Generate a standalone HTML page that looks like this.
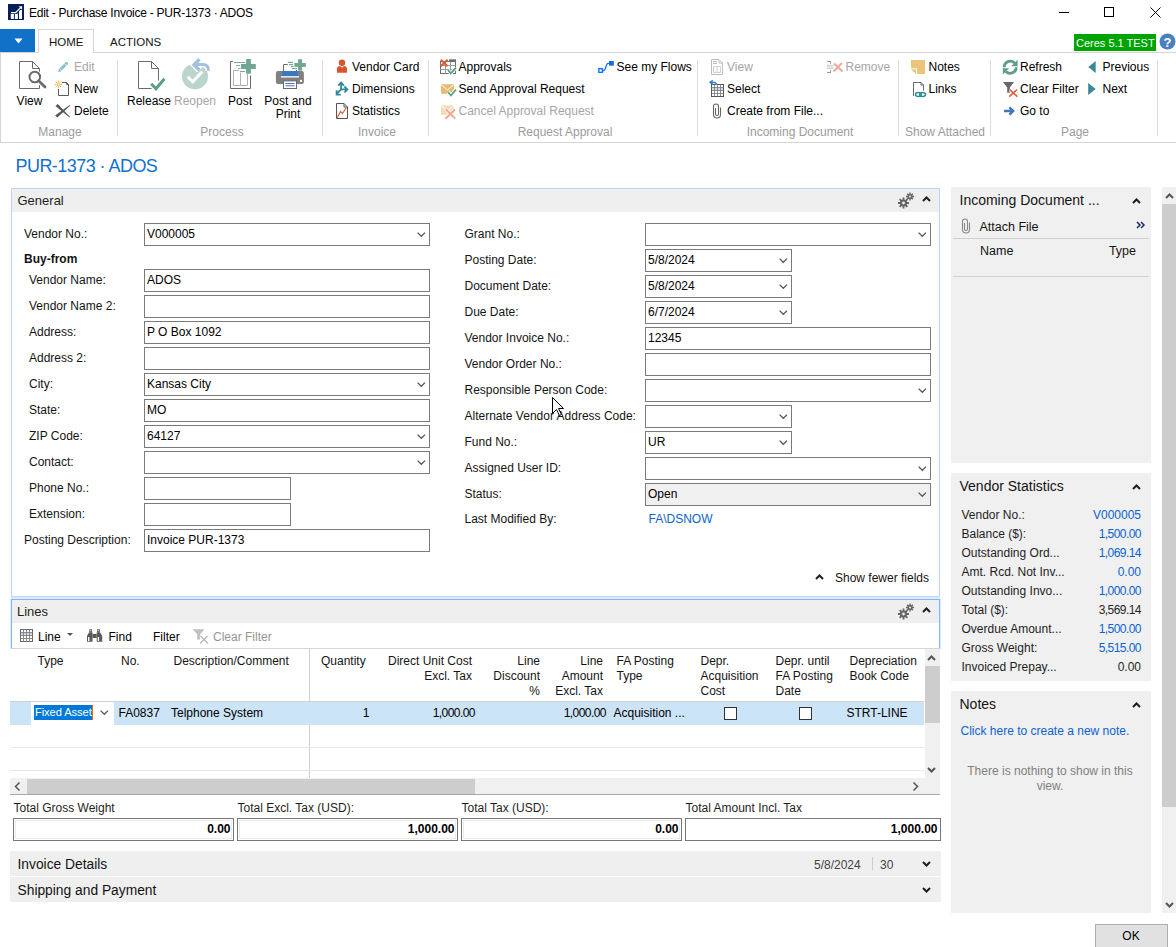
<!DOCTYPE html>
<html><head><meta charset="utf-8"><title>Edit - Purchase Invoice</title>
<style>
html,body{margin:0;padding:0;}
body{width:1176px;height:947px;position:relative;overflow:hidden;background:#fff;font-family:"Liberation Sans", sans-serif;}
.t{position:absolute;white-space:nowrap;font-family:"Liberation Sans", sans-serif;}
svg{overflow:visible}
</style></head><body>
<svg style="position:absolute;left:8px;top:4px" width="16" height="16" viewBox="0 0 16 16"><rect width="16" height="16" fill="#03205a"/><path d="M2.8 9.5V15H5.9V9.5zM6.9 9.5V15H9.9V9.5zM11 6V15H14V6z" fill="#fff"/><path d="M3 8.6H7.6L13 3.2" fill="none" stroke="#03205a" stroke-width="2.8"/><path d="M3 8.6H7.6L12.6 3.6" fill="none" stroke="#fff" stroke-width="1.3"/><path d="M10.6 2.3H14.1V5.8Z" fill="#fff"/></svg>
<div class="t" style="left:29px;top:7px;font-size:12px;line-height:12px;color:#000;letter-spacing:-0.25px;">Edit - Purchase Invoice - PUR-1373 · ADOS</div>
<div style="position:absolute;left:1059px;top:12px;width:10px;height:1px;background:#000"></div>
<div style="position:absolute;left:1104px;top:7px;width:8px;height:8px;border:1px solid #000"></div>
<svg style="position:absolute;left:1150px;top:7px" width="11" height="11" viewBox="0 0 11 11"><path d="M0.5 0.5L10.5 10.5M10.5 0.5L0.5 10.5" stroke="#000" stroke-width="1"/></svg>
<div style="position:absolute;left:0px;top:29px;width:35px;height:23px;background:#1170c8"></div>
<svg style="position:absolute;left:14px;top:38px" width="9" height="6" viewBox="0 0 9 6"><path d="M0.5 0.5H8.5L4.5 5.5z" fill="#fff"/></svg>
<div style="position:absolute;left:0px;top:52px;width:1176px;height:1px;background:#d5d5d5"></div>
<div style="position:absolute;left:38px;top:29px;width:54px;height:23px;background:#fff;border:1px solid #d5d5d5;border-bottom:none"></div>
<div class="t" style="left:49px;top:36.5px;font-size:11.5px;line-height:11.5px;color:#141414;">HOME</div>
<div class="t" style="left:110px;top:36.5px;font-size:11.5px;line-height:11.5px;color:#141414;">ACTIONS</div>
<div style="position:absolute;left:1074px;top:34px;width:82px;height:17px;background:#00a400"></div>
<div class="t" style="left:1076px;top:38px;font-size:11px;line-height:11px;color:#fff;">Ceres 5.1 TEST</div>
<svg style="position:absolute;left:1159px;top:33px" width="17" height="17" viewBox="0 0 17 17"><circle cx="8.5" cy="8.5" r="8" fill="#4a7fc1"/><text x="8.5" y="13.5" font-family="Liberation Sans" font-weight="bold" font-size="13" fill="#fff" text-anchor="middle">?</text></svg>
<div style="position:absolute;left:0px;top:53px;width:1px;height:90px;background:#d5d5d5"></div>
<div style="position:absolute;left:0px;top:142px;width:1176px;height:1px;background:#d5d5d5"></div>
<div style="position:absolute;left:117px;top:60px;width:1px;height:76px;background:#dcdcdc"></div>
<div style="position:absolute;left:322px;top:60px;width:1px;height:76px;background:#dcdcdc"></div>
<div style="position:absolute;left:428px;top:60px;width:1px;height:76px;background:#dcdcdc"></div>
<div style="position:absolute;left:697px;top:60px;width:1px;height:76px;background:#dcdcdc"></div>
<div style="position:absolute;left:898px;top:60px;width:1px;height:76px;background:#dcdcdc"></div>
<div style="position:absolute;left:990px;top:60px;width:1px;height:76px;background:#dcdcdc"></div>
<div style="position:absolute;left:1157px;top:60px;width:1px;height:76px;background:#dcdcdc"></div>
<div class="t" style="left:-270.5px;width:600px;text-align:center;top:94.5px;font-size:12px;line-height:12px;color:#000;">View</div>
<div class="t" style="left:74px;top:61px;font-size:12px;line-height:12px;color:#a6a6a6;">Edit</div>
<div class="t" style="left:74px;top:83px;font-size:12px;line-height:12px;color:#000;">New</div>
<div class="t" style="left:74px;top:105px;font-size:12px;line-height:12px;color:#000;">Delete</div>
<div class="t" style="left:-240px;width:600px;text-align:center;top:126px;font-size:12px;line-height:12px;color:#9b9b9b;">Manage</div>
<div class="t" style="left:-151px;width:600px;text-align:center;top:94.5px;font-size:12px;line-height:12px;color:#000;">Release</div>
<div class="t" style="left:-105px;width:600px;text-align:center;top:94.5px;font-size:12px;line-height:12px;color:#a6a6a6;">Reopen</div>
<div class="t" style="left:-60px;width:600px;text-align:center;top:94.5px;font-size:12px;line-height:12px;color:#000;">Post</div>
<div class="t" style="left:-12px;width:600px;text-align:center;top:94.5px;font-size:12px;line-height:12px;color:#000;">Post and</div>
<div class="t" style="left:-12px;width:600px;text-align:center;top:107.5px;font-size:12px;line-height:12px;color:#000;">Print</div>
<div class="t" style="left:-78px;width:600px;text-align:center;top:126px;font-size:12px;line-height:12px;color:#9b9b9b;">Process</div>
<div class="t" style="left:352px;top:61px;font-size:12px;line-height:12px;color:#000;">Vendor Card</div>
<div class="t" style="left:352px;top:83px;font-size:12px;line-height:12px;color:#000;">Dimensions</div>
<div class="t" style="left:352px;top:105px;font-size:12px;line-height:12px;color:#000;">Statistics</div>
<div class="t" style="left:77px;width:600px;text-align:center;top:126px;font-size:12px;line-height:12px;color:#9b9b9b;">Invoice</div>
<div class="t" style="left:458.5px;top:61px;font-size:12px;line-height:12px;color:#000;">Approvals</div>
<div class="t" style="left:458.5px;top:83px;font-size:12px;line-height:12px;color:#000;">Send Approval Request</div>
<div class="t" style="left:458.5px;top:105px;font-size:12px;line-height:12px;color:#a6a6a6;">Cancel Approval Request</div>
<div class="t" style="left:616.5px;top:61px;font-size:12px;line-height:12px;color:#000;">See my Flows</div>
<div class="t" style="left:265px;width:600px;text-align:center;top:126px;font-size:12px;line-height:12px;color:#9b9b9b;">Request Approval</div>
<div class="t" style="left:727px;top:61px;font-size:12px;line-height:12px;color:#a6a6a6;">View</div>
<div class="t" style="left:845.5px;top:61px;font-size:12px;line-height:12px;color:#a6a6a6;">Remove</div>
<div class="t" style="left:727px;top:83px;font-size:12px;line-height:12px;color:#000;">Select</div>
<svg style="position:absolute;left:712.5px;top:102.5px" width="9" height="16" viewBox="0 0 9 16"><path d="M7.5 4.5V11.5A3.5 3.5 0 0 1 0.5 11.5V3.5A2.5 2.5 0 0 1 5.5 3.5V11A1.5 1.5 0 0 1 2.5 11V5" fill="none" stroke="#666" stroke-width="1.1"/></svg>
<div class="t" style="left:727px;top:105px;font-size:12px;line-height:12px;color:#000;">Create from File...</div>
<div class="t" style="left:500px;width:600px;text-align:center;top:126px;font-size:12px;line-height:12px;color:#9b9b9b;">Incoming Document</div>
<div class="t" style="left:928.5px;top:61px;font-size:12px;line-height:12px;color:#000;">Notes</div>
<div class="t" style="left:928.5px;top:83px;font-size:12px;line-height:12px;color:#000;">Links</div>
<div class="t" style="left:645px;width:600px;text-align:center;top:126px;font-size:12px;line-height:12px;color:#9b9b9b;">Show Attached</div>
<div class="t" style="left:1020px;top:61px;font-size:12px;line-height:12px;color:#000;">Refresh</div>
<div class="t" style="left:1020px;top:83px;font-size:12px;line-height:12px;color:#000;">Clear Filter</div>
<div class="t" style="left:1020px;top:105px;font-size:12px;line-height:12px;color:#000;">Go to</div>
<div class="t" style="left:1102.5px;top:61px;font-size:12px;line-height:12px;color:#000;">Previous</div>
<div class="t" style="left:1102.5px;top:83px;font-size:12px;line-height:12px;color:#000;">Next</div>
<div class="t" style="left:775px;width:600px;text-align:center;top:126px;font-size:12px;line-height:12px;color:#9b9b9b;">Page</div>
<svg style="position:absolute;left:0;top:0" width="1176" height="150" viewBox="0 0 1176 150"><path d="M19.5 61.5H32.5L39.5 68.5V88.5H19.5Z" fill="#fff" stroke="#6b6b6b"/><path d="M32.5 61.5V68.5H39.5" fill="none" stroke="#6b6b6b"/><circle cx="34.8" cy="77" r="7.2" fill="#fff"/><path d="M38.5 80.7L45.3 87.3" stroke="#fff" stroke-width="5"/><circle cx="34.8" cy="77" r="5.3" fill="none" stroke="#6b6b6b" stroke-width="2"/><path d="M38.6 80.8L45 87" stroke="#6b6b6b" stroke-width="2.8" stroke-linecap="round"/><path d="M60.3 69.7L66.6 63.4" stroke="#8ec0cc" stroke-width="3" stroke-linecap="round"/><path d="M58 72.2L58.9 68.9L61.3 71.3Z" fill="#8ec0cc"/><path d="M64.6 63.6L66.4 65.4M59.5 68.7L61.3 70.5" stroke="#fff" stroke-width="0.8"/><path d="M62 82.5H66.5L68.5 84.5V95.5H58.5V89" fill="none" stroke="#5a5a5a"/><path d="M66.5 82.5V84.5H68.5" fill="none" stroke="#5a5a5a"/><path d="M58.4 80.6V82.4M58.4 86.4V88.2M54.6 84.4H56.4M60.4 84.4H62.2M55.7 81.7L57 83M59.8 85.8L61.1 87.1M61.1 81.7L59.8 83M57 85.8L55.7 87.1" stroke="#f0a838" stroke-width="0.9"/><circle cx="58.4" cy="84.4" r="1.3" fill="#fff" stroke="#f0a838" stroke-width="0.9"/><path d="M57.7 103.9L70.1 117L69.5 117.6L55.5 106.1Z" fill="#555"/><path d="M55.1 115.4L69.7 105L70.3 105.6L57.3 117.6Z" fill="#555"/><path d="M138.5 61.5H151.5L158.5 68.5V88.5H138.5Z" fill="#fff"/><path d="M158.5 80.5V68.5L151.5 61.5H138.5V88.5H151.5" fill="none" stroke="#6b6b6b"/><path d="M151.5 61.5V68.5H158.5" fill="none" stroke="#6b6b6b"/><path d="M151.2 83.8L156 88.8L164.4 78.8" fill="none" stroke="#5a9e88" stroke-width="3"/><circle cx="195" cy="76.4" r="13" fill="#bad5cb"/><path d="M187.7 76.8L192.7 81.8L202.3 71.4" fill="none" stroke="#fff" stroke-width="3"/><g fill="none" stroke="#fff" stroke-width="6"><path d="M199.5 59.3L194 64.7L199.5 70.3"/><path d="M196 64.6H203C206.5 64.6 208.5 67 208.5 70.8"/></g><g fill="none" stroke="#a3c0e0"><path d="M199.5 59.3L194 64.7L199.5 70.3" stroke-width="3.4"/><path d="M196 64.6H203C206.5 64.6 208.5 67 208.5 70.8" stroke-width="3"/></g><path d="M233 61.5H230.5V88.5H250.5V75.5" fill="none" stroke="#6b6b6b"/><path d="M239 70.5H233.5V85.5H247.5V74M240.5 72.5V85.5" fill="none" stroke="#b0b0b0"/><path d="M234 62.5H245M236 65.5H240M238 68.5H240.5M240 71.5H245" stroke="#7aab98" stroke-width="1.2"/><rect x="246.1" y="59" width="4.8" height="14.7" fill="#6fa792"/><rect x="241" y="64" width="14.8" height="5" fill="#6fa792"/><rect x="298.1" y="59.2" width="3.9" height="11.5" fill="#6fa792"/><rect x="294.3" y="63" width="11.5" height="3.9" fill="#6fa792"/><path d="M287.8 62.4H293M289 64.6H293M291 66.6H293.5M292 68.5H297" stroke="#7aab98" stroke-width="1.1"/><path d="M287.8 64.5H283.5V72M296.5 70V72" fill="none" stroke="#6b6b6b"/><rect x="275.9" y="71.1" width="28" height="12.8" rx="2" fill="#808080"/><rect x="282" y="71" width="16.1" height="5" fill="#3c78c0"/><rect x="281" y="76.2" width="18" height="1.3" fill="#fff"/><rect x="283.5" y="80.9" width="13" height="7.6" fill="#fff" stroke="#6b6b6b"/><path d="M285.5 83.5H294.5M285.5 85.7H294.5" stroke="#3c78c0" stroke-width="1.1"/><rect x="300" y="79.9" width="2" height="2" fill="#fff"/><circle cx="342" cy="62.8" r="3.2" fill="#d9562c"/><path d="M337 72.8V69C337 67 338.5 66.1 340 66.1L342 67.8L344 66.1C345.5 66.1 347 67 347 69V72.8Z" fill="#d9562c"/><path d="M341.1 89.4V83.5M338.2 85.6L341.1 82.6L344 85.6M341.1 89.4H346.5M344.4 86.5L347.4 89.4L344.4 92.3M341.1 89.4L337 93.5M336.6 90.3V94.6H340.8" fill="none" stroke="#2e8a96" stroke-width="1.8"/><path d="M336.5 103.5H344L347.5 107V118.5H336.5Z" fill="#fff" stroke="#555"/><path d="M344 103.5V107H347.5" fill="none" stroke="#555"/><path d="M337.3 117.8L340.5 111.5L342.5 113.5L346.5 107.2" fill="none" stroke="#e06040" stroke-width="1.2"/><rect x="440.5" y="61.5" width="15" height="12" fill="#fff" stroke="#6f6f6f"/><path d="M440.5 65.5H455.5M440.5 69.5H455.5M445.5 61.5V73.5M450.5 61.5V73.5" stroke="#9a9a9a"/><rect x="449" y="59.3" width="7" height="2.5" fill="#6f6f6f"/><path d="M440.8 59.6L447.6 66.2M447.6 59.6L440.8 66.2" stroke="#dc5a35" stroke-width="2"/><path d="M448 70L450.8 73.4L456 67.6" fill="none" stroke="#fff" stroke-width="3.5"/><path d="M448 70L450.8 73.4L456 67.6" fill="none" stroke="#5a9e88" stroke-width="1.8"/><rect x="441" y="84.2" width="13" height="9.6" fill="#e8bb70"/><path d="M441 84.5L447.5 90L454 84.5" fill="none" stroke="#fff" stroke-width="1"/><path d="M447.8 92L451 95.5L456 89.5" fill="none" stroke="#fff" stroke-width="3.5"/><path d="M447.8 92L451 95.5L456 89.5" fill="none" stroke="#5a9e88" stroke-width="1.8"/><rect x="441" y="105.3" width="13" height="9.6" fill="#f5dcb8"/><path d="M441 105.6L447.5 111L454 105.6" fill="none" stroke="#fff" stroke-width="1"/><path d="M445.8 109.2L455.3 118.6M455 109.5L445.5 118.8" stroke="#fff" stroke-width="3.5"/><path d="M445.8 109.2L455.3 118.6M455 109.5L445.5 118.8" stroke="#eaa898" stroke-width="2"/><rect x="598.8" y="68.7" width="3.6" height="3.6" fill="none" stroke="#0a6cff" stroke-width="1.3"/><path d="M602.4 70.5H603.8C606 70.5 605.8 63.3 608 63.3H609.5" fill="none" stroke="#0a6cff" stroke-width="1.3"/><rect x="609" y="61" width="4.8" height="4.7" fill="#0a6cff"/><path d="M711.5 59.5H719L722.5 63V74.5H711.5Z" fill="#fff" stroke="#bdbdbd"/><path d="M719 59.5V63H722.5" fill="none" stroke="#bdbdbd"/><path d="M713 61.5H717M713 63.5H717" stroke="#a8c4e0"/><path d="M713.5 66.5H720.5V72.5H713.5ZM717 66.5V72.5" fill="none" stroke="#d0d0d0"/><path d="M830.5 63.8V61.5H827M830.5 70.2V72.5H827" fill="none" stroke="#999" stroke-width="1.1"/><rect x="827" y="65.2" width="7" height="3.3" fill="#dde8f3"/><path d="M827 65.3H833M827 68.4H833" stroke="#c8c8c8" stroke-width="0.8"/><path d="M834 63.5L842.5 71.5M842 63L833.5 71.5" stroke="#eeaa98" stroke-width="2"/><rect x="711.5" y="84.5" width="12" height="12" fill="#fff" stroke="#555"/><rect x="712" y="87.6" width="11" height="3" fill="#c8ddf0"/><path d="M711.5 87.5H723.5M711.5 90.5H723.5M711.5 93.5H723.5M714.5 84.5V96.5M717.5 84.5V96.5M720.5 84.5V96.5" stroke="#777" stroke-width="0.8"/><path d="M716.5 85C716.5 83 715 82.3 713 82.3H711" fill="none" stroke="#3e7cc0" stroke-width="1.4"/><path d="M712.8 80.2L710 82.3L712.8 84.4" fill="none" stroke="#3e7cc0" stroke-width="1.4"/><path d="M911 60H925V74H917V68.2H911Z" fill="#ecc47a"/><path d="M911 69.2H916V74Z" fill="#ecc47a"/><path d="M913.5 95.9V82.5H921L923.5 85V90.6" fill="none" stroke="#6b6b6b"/><path d="M921 82.5V85H923.5" fill="none" stroke="#6b6b6b"/><ellipse cx="918.4" cy="94.5" rx="2.9" ry="2" fill="none" stroke="#fff" stroke-width="3"/><ellipse cx="918.4" cy="94.5" rx="2.9" ry="2" fill="none" stroke="#2e8a96" stroke-width="1.5"/><ellipse cx="922.6" cy="94.5" rx="2.9" ry="2" fill="none" stroke="#2e8a96" stroke-width="1.5"/><g fill="none" stroke="#5a9e86" stroke-width="2.8"><path d="M1004.2 67.2A6 6 0 0 1 1014.5 63"/><path d="M1016.2 67.2A6 6 0 0 1 1005.9 71.4"/></g><path d="M1017.6 59.8V66.2H1011.2Z" fill="#5a9e86"/><path d="M1002.8 74.6V68.2H1009.2Z" fill="#5a9e86"/><path d="M1003 82H1014L1009.8 87.6V92.7H1007.2V87.6Z" fill="#666"/><path d="M1009.6 89.6L1017.4 96.6M1017 89.6L1009.2 96.6" stroke="#fff" stroke-width="3"/><path d="M1009.6 89.6L1017.4 96.6M1017 89.6L1009.2 96.6" stroke="#e05a3a" stroke-width="1.5"/><path d="M1004 111H1013.2M1009.4 107.3L1013.3 111L1009.4 114.7" fill="none" stroke="#3e78b8" stroke-width="2.3"/><path d="M1095.7 61V72.9L1088.3 66.9Z" fill="#3b8898"/><path d="M1088.2 83.1V95L1095.7 89Z" fill="#3b8898"/></svg>
<div class="t" style="left:15.5px;top:156.5px;font-size:18px;line-height:18px;color:#1170cf;letter-spacing:-0.55px">PUR-1373 · ADOS</div>
<div style="position:absolute;left:11px;top:188px;width:927px;height:407px;border:1px solid #bcd5f8"></div>
<div style="position:absolute;left:12px;top:189px;width:927px;height:23px;background:#efefef"></div>
<div class="t" style="left:17.5px;top:194px;font-size:13px;line-height:13px;color:#1e1e1e;">General</div>
<svg style="position:absolute;left:896px;top:192px" width="22" height="18" viewBox="0 0 22 18"><g fill="#666"><circle cx="7.5" cy="11" r="3.6"/><g stroke="#666" stroke-width="1.8"><path d="M7.5 5.5V16.5M2 11H13M3.6 7.1L11.4 14.9M11.4 7.1L3.6 14.9"/></g><circle cx="7.5" cy="11" r="1.4" fill="#efefef"/><circle cx="14" cy="4.5" r="2.6"/><g stroke="#666" stroke-width="1.4"><path d="M14 0.5V8.5M10 4.5H18M11.2 1.7L16.8 7.3M16.8 1.7L11.2 7.3"/></g><circle cx="14" cy="4.5" r="1" fill="#efefef"/></g></svg>
<svg style="position:absolute;left:922px;top:196px" width="9" height="6" viewBox="0 0 9 6"><path d="M1 5L4.5 1.5L8 5" fill="none" stroke="#1e1e1e" stroke-width="2"/></svg>
<div class="t" style="left:24px;top:227.5px;font-size:12px;line-height:12px;color:#141414;">Vendor No.:</div>
<div style="position:absolute;left:144px;top:223px;width:284px;height:21px;border:1px solid #7a7a7a;background:#fff"></div>
<div class="t" style="left:147px;top:227.5px;font-size:12px;line-height:12px;color:#000;">V000005</div>
<svg style="position:absolute;left:417px;top:232px" width="10" height="6" viewBox="0 0 10 6"><path d="M0.6 0.6L4.3 4.3L8 0.6" fill="none" stroke="#555" stroke-width="1.3"/></svg>
<div class="t" style="left:29px;top:273.5px;font-size:12px;line-height:12px;color:#141414;">Vendor Name:</div>
<div style="position:absolute;left:144px;top:269px;width:284px;height:21px;border:1px solid #7a7a7a;background:#fff"></div>
<div class="t" style="left:147px;top:273.5px;font-size:12px;line-height:12px;color:#000;">ADOS</div>
<div class="t" style="left:29px;top:299.5px;font-size:12px;line-height:12px;color:#141414;">Vendor Name 2:</div>
<div style="position:absolute;left:144px;top:295px;width:284px;height:21px;border:1px solid #7a7a7a;background:#fff"></div>
<div class="t" style="left:29px;top:325.5px;font-size:12px;line-height:12px;color:#141414;">Address:</div>
<div style="position:absolute;left:144px;top:321px;width:284px;height:21px;border:1px solid #7a7a7a;background:#fff"></div>
<div class="t" style="left:147px;top:325.5px;font-size:12px;line-height:12px;color:#000;">P O Box 1092</div>
<div class="t" style="left:29px;top:351.5px;font-size:12px;line-height:12px;color:#141414;">Address 2:</div>
<div style="position:absolute;left:144px;top:347px;width:284px;height:21px;border:1px solid #7a7a7a;background:#fff"></div>
<div class="t" style="left:29px;top:377.5px;font-size:12px;line-height:12px;color:#141414;">City:</div>
<div style="position:absolute;left:144px;top:373px;width:284px;height:21px;border:1px solid #7a7a7a;background:#fff"></div>
<div class="t" style="left:147px;top:377.5px;font-size:12px;line-height:12px;color:#000;">Kansas City</div>
<svg style="position:absolute;left:417px;top:382px" width="10" height="6" viewBox="0 0 10 6"><path d="M0.6 0.6L4.3 4.3L8 0.6" fill="none" stroke="#555" stroke-width="1.3"/></svg>
<div class="t" style="left:29px;top:403.5px;font-size:12px;line-height:12px;color:#141414;">State:</div>
<div style="position:absolute;left:144px;top:399px;width:284px;height:21px;border:1px solid #7a7a7a;background:#fff"></div>
<div class="t" style="left:147px;top:403.5px;font-size:12px;line-height:12px;color:#000;">MO</div>
<div class="t" style="left:29px;top:429.5px;font-size:12px;line-height:12px;color:#141414;">ZIP Code:</div>
<div style="position:absolute;left:144px;top:425px;width:284px;height:21px;border:1px solid #7a7a7a;background:#fff"></div>
<div class="t" style="left:147px;top:429.5px;font-size:12px;line-height:12px;color:#000;">64127</div>
<svg style="position:absolute;left:417px;top:434px" width="10" height="6" viewBox="0 0 10 6"><path d="M0.6 0.6L4.3 4.3L8 0.6" fill="none" stroke="#555" stroke-width="1.3"/></svg>
<div class="t" style="left:29px;top:455.5px;font-size:12px;line-height:12px;color:#141414;">Contact:</div>
<div style="position:absolute;left:144px;top:451px;width:284px;height:21px;border:1px solid #7a7a7a;background:#fff"></div>
<svg style="position:absolute;left:417px;top:460px" width="10" height="6" viewBox="0 0 10 6"><path d="M0.6 0.6L4.3 4.3L8 0.6" fill="none" stroke="#555" stroke-width="1.3"/></svg>
<div class="t" style="left:29px;top:481.5px;font-size:12px;line-height:12px;color:#141414;">Phone No.:</div>
<div style="position:absolute;left:144px;top:477px;width:145px;height:21px;border:1px solid #7a7a7a;background:#fff"></div>
<div class="t" style="left:29px;top:507.5px;font-size:12px;line-height:12px;color:#141414;">Extension:</div>
<div style="position:absolute;left:144px;top:503px;width:145px;height:21px;border:1px solid #7a7a7a;background:#fff"></div>
<div class="t" style="left:24px;top:533.5px;font-size:12px;line-height:12px;color:#141414;">Posting Description:</div>
<div style="position:absolute;left:144px;top:529px;width:284px;height:21px;border:1px solid #7a7a7a;background:#fff"></div>
<div class="t" style="left:147px;top:533.5px;font-size:12px;line-height:12px;color:#000;">Invoice PUR-1373</div>
<div class="t" style="left:24px;top:253px;font-size:12px;line-height:12px;color:#141414;font-weight:bold;">Buy-from</div>
<div class="t" style="left:464.5px;top:227.5px;font-size:12px;line-height:12px;color:#141414;">Grant No.:</div>
<div style="position:absolute;left:645px;top:223px;width:284px;height:21px;border:1px solid #7a7a7a;background:#fff"></div>
<svg style="position:absolute;left:918px;top:232px" width="10" height="6" viewBox="0 0 10 6"><path d="M0.6 0.6L4.3 4.3L8 0.6" fill="none" stroke="#555" stroke-width="1.3"/></svg>
<div class="t" style="left:464.5px;top:253.5px;font-size:12px;line-height:12px;color:#141414;">Posting Date:</div>
<div style="position:absolute;left:645px;top:249px;width:145px;height:21px;border:1px solid #7a7a7a;background:#fff"></div>
<div class="t" style="left:648px;top:253.5px;font-size:12px;line-height:12px;color:#000;">5/8/2024</div>
<svg style="position:absolute;left:779px;top:258px" width="10" height="6" viewBox="0 0 10 6"><path d="M0.6 0.6L4.3 4.3L8 0.6" fill="none" stroke="#555" stroke-width="1.3"/></svg>
<div class="t" style="left:464.5px;top:279.5px;font-size:12px;line-height:12px;color:#141414;">Document Date:</div>
<div style="position:absolute;left:645px;top:275px;width:145px;height:21px;border:1px solid #7a7a7a;background:#fff"></div>
<div class="t" style="left:648px;top:279.5px;font-size:12px;line-height:12px;color:#000;">5/8/2024</div>
<svg style="position:absolute;left:779px;top:284px" width="10" height="6" viewBox="0 0 10 6"><path d="M0.6 0.6L4.3 4.3L8 0.6" fill="none" stroke="#555" stroke-width="1.3"/></svg>
<div class="t" style="left:464.5px;top:305.5px;font-size:12px;line-height:12px;color:#141414;">Due Date:</div>
<div style="position:absolute;left:645px;top:301px;width:145px;height:21px;border:1px solid #7a7a7a;background:#fff"></div>
<div class="t" style="left:648px;top:305.5px;font-size:12px;line-height:12px;color:#000;">6/7/2024</div>
<svg style="position:absolute;left:779px;top:310px" width="10" height="6" viewBox="0 0 10 6"><path d="M0.6 0.6L4.3 4.3L8 0.6" fill="none" stroke="#555" stroke-width="1.3"/></svg>
<div class="t" style="left:464.5px;top:331.5px;font-size:12px;line-height:12px;color:#141414;">Vendor Invoice No.:</div>
<div style="position:absolute;left:645px;top:327px;width:284px;height:21px;border:1px solid #7a7a7a;background:#fff"></div>
<div class="t" style="left:648px;top:331.5px;font-size:12px;line-height:12px;color:#000;">12345</div>
<div class="t" style="left:464.5px;top:357.5px;font-size:12px;line-height:12px;color:#141414;">Vendor Order No.:</div>
<div style="position:absolute;left:645px;top:353px;width:284px;height:21px;border:1px solid #7a7a7a;background:#fff"></div>
<div class="t" style="left:464.5px;top:383.5px;font-size:12px;line-height:12px;color:#141414;">Responsible Person Code:</div>
<div style="position:absolute;left:645px;top:379px;width:284px;height:21px;border:1px solid #7a7a7a;background:#fff"></div>
<svg style="position:absolute;left:918px;top:388px" width="10" height="6" viewBox="0 0 10 6"><path d="M0.6 0.6L4.3 4.3L8 0.6" fill="none" stroke="#555" stroke-width="1.3"/></svg>
<div class="t" style="left:464.5px;top:409.5px;font-size:12px;line-height:12px;color:#141414;">Alternate Vendor Address Code:</div>
<div style="position:absolute;left:645px;top:405px;width:145px;height:21px;border:1px solid #7a7a7a;background:#fff"></div>
<svg style="position:absolute;left:779px;top:414px" width="10" height="6" viewBox="0 0 10 6"><path d="M0.6 0.6L4.3 4.3L8 0.6" fill="none" stroke="#555" stroke-width="1.3"/></svg>
<div class="t" style="left:464.5px;top:435.5px;font-size:12px;line-height:12px;color:#141414;">Fund No.:</div>
<div style="position:absolute;left:645px;top:431px;width:145px;height:21px;border:1px solid #7a7a7a;background:#fff"></div>
<div class="t" style="left:648px;top:435.5px;font-size:12px;line-height:12px;color:#000;">UR</div>
<svg style="position:absolute;left:779px;top:440px" width="10" height="6" viewBox="0 0 10 6"><path d="M0.6 0.6L4.3 4.3L8 0.6" fill="none" stroke="#555" stroke-width="1.3"/></svg>
<div class="t" style="left:464.5px;top:461.5px;font-size:12px;line-height:12px;color:#141414;">Assigned User ID:</div>
<div style="position:absolute;left:645px;top:457px;width:284px;height:21px;border:1px solid #7a7a7a;background:#fff"></div>
<svg style="position:absolute;left:918px;top:466px" width="10" height="6" viewBox="0 0 10 6"><path d="M0.6 0.6L4.3 4.3L8 0.6" fill="none" stroke="#555" stroke-width="1.3"/></svg>
<div class="t" style="left:464.5px;top:487.5px;font-size:12px;line-height:12px;color:#141414;">Status:</div>
<div style="position:absolute;left:645px;top:483px;width:284px;height:21px;border:1px solid #7a7a7a;background:#f0f0f0"></div>
<div class="t" style="left:648px;top:487.5px;font-size:12px;line-height:12px;color:#000;">Open</div>
<svg style="position:absolute;left:918px;top:492px" width="10" height="6" viewBox="0 0 10 6"><path d="M0.6 0.6L4.3 4.3L8 0.6" fill="none" stroke="#555" stroke-width="1.3"/></svg>
<div class="t" style="left:464.5px;top:513px;font-size:12px;line-height:12px;color:#141414;">Last Modified By:</div>
<div class="t" style="left:648.5px;top:513px;font-size:12px;line-height:12px;color:#0b63d0;">FA\DSNOW</div>
<svg style="position:absolute;left:815px;top:574px" width="9" height="6" viewBox="0 0 9 6"><path d="M1 5L4.5 1.5L8 5" fill="none" stroke="#1e1e1e" stroke-width="2"/></svg>
<div class="t" style="left:835px;top:572px;font-size:12px;line-height:12px;color:#141414;">Show fewer fields</div>
<div style="position:absolute;left:11px;top:599px;width:927px;height:49px;border:1px solid #82b5fb;border-bottom:none;box-shadow:0 -2px 0 #dde9fc, 1px 0 0 #dde9fc, -1px 0 0 #dde9fc"></div>
<div style="position:absolute;left:12px;top:600px;width:927px;height:23px;background:#efefef"></div>
<div class="t" style="left:17px;top:605px;font-size:13px;line-height:13px;color:#1e1e1e;">Lines</div>
<svg style="position:absolute;left:896px;top:603px" width="22" height="18" viewBox="0 0 22 18"><g fill="#666"><circle cx="7.5" cy="11" r="3.6"/><g stroke="#666" stroke-width="1.8"><path d="M7.5 5.5V16.5M2 11H13M3.6 7.1L11.4 14.9M11.4 7.1L3.6 14.9"/></g><circle cx="7.5" cy="11" r="1.4" fill="#efefef"/><circle cx="14" cy="4.5" r="2.6"/><g stroke="#666" stroke-width="1.4"><path d="M14 0.5V8.5M10 4.5H18M11.2 1.7L16.8 7.3M16.8 1.7L11.2 7.3"/></g><circle cx="14" cy="4.5" r="1" fill="#efefef"/></g></svg>
<svg style="position:absolute;left:922px;top:607px" width="9" height="6" viewBox="0 0 9 6"><path d="M1 5L4.5 1.5L8 5" fill="none" stroke="#1e1e1e" stroke-width="2"/></svg>
<svg style="position:absolute;left:19px;top:628px" width="15" height="15" viewBox="0 0 15 15"><rect x="1.5" y="1.5" width="12" height="12" fill="#fff" stroke="#666"/><rect x="2" y="4.5" width="11" height="3" fill="#c6dcf2"/><path d="M1.5 4.5H13.5M1.5 7.5H13.5M1.5 10.5H13.5M4.5 1.5V13.5M7.5 1.5V13.5M10.5 1.5V13.5" stroke="#888"/></svg>
<div class="t" style="left:38px;top:631px;font-size:12px;line-height:12px;color:#000;">Line</div>
<svg style="position:absolute;left:67px;top:633px" width="7" height="4" viewBox="0 0 7 4"><path d="M0 0H6L3 3z" fill="#555"/></svg>
<svg style="position:absolute;left:0;top:600px" width="300" height="50" viewBox="0 600 300 50"><g fill="#5a5a5a"><path d="M87 641.8V636L89 632.5H92.5V641.8Z"/><path d="M102.2 641.8V636L100.2 632.5H96.7V641.8Z"/><rect x="92.5" y="634" width="4.2" height="4"/><rect x="89.3" y="629.3" width="2.8" height="3.4"/><rect x="97.1" y="629.3" width="2.8" height="3.4"/></g><g fill="#fff"><rect x="88" y="637" width="1.4" height="4"/><rect x="97.7" y="637" width="1.4" height="4"/><rect x="90.2" y="630.2" width="1" height="1"/><rect x="98" y="630.2" width="1" height="1"/></g><path d="M192.5 629.3H204.5L200.2 634.3V639.5H197.2V634.3Z" fill="#c0c0c0"/><path d="M200.5 636L208 643.5M207.5 636L200 643.5" stroke="#fff" stroke-width="3"/><path d="M200.5 636L208 643.5M207.5 636L200 643.5" stroke="#b8b8b8" stroke-width="1.3"/></svg>
<div class="t" style="left:108.5px;top:631px;font-size:12px;line-height:12px;color:#000;">Find</div>
<div class="t" style="left:153px;top:631px;font-size:12px;line-height:12px;color:#000;">Filter</div>
<div class="t" style="left:213px;top:631px;font-size:12px;line-height:12px;color:#959595;">Clear Filter</div>
<div style="position:absolute;left:11px;top:648px;width:929px;height:1px;background:#d5d5d5"></div>
<div style="position:absolute;left:309px;top:649px;width:1px;height:129px;background:#d0d0d0"></div>
<div class="t" style="left:37.5px;top:655px;font-size:12px;line-height:12px;color:#141414;">Type</div>
<div class="t" style="left:121px;top:655px;font-size:12px;line-height:12px;color:#141414;">No.</div>
<div class="t" style="left:173.5px;top:655px;font-size:12px;line-height:12px;color:#141414;">Description/Comment</div>
<div class="t" style="left:321px;top:655px;font-size:12px;line-height:12px;color:#141414;">Quantity</div>
<div class="t" style="right:704px;top:655px;font-size:12px;line-height:12px;color:#141414;">Direct Unit Cost</div>
<div class="t" style="right:704px;top:670px;font-size:12px;line-height:12px;color:#141414;">Excl. Tax</div>
<div class="t" style="right:636px;top:655px;font-size:12px;line-height:12px;color:#141414;">Line</div>
<div class="t" style="right:636px;top:670px;font-size:12px;line-height:12px;color:#141414;">Discount</div>
<div class="t" style="right:636px;top:685px;font-size:12px;line-height:12px;color:#141414;">%</div>
<div class="t" style="right:573px;top:655px;font-size:12px;line-height:12px;color:#141414;">Line</div>
<div class="t" style="right:573px;top:670px;font-size:12px;line-height:12px;color:#141414;">Amount</div>
<div class="t" style="right:573px;top:685px;font-size:12px;line-height:12px;color:#141414;">Excl. Tax</div>
<div class="t" style="left:616.5px;top:655px;font-size:12px;line-height:12px;color:#141414;">FA Posting</div>
<div class="t" style="left:616.5px;top:670px;font-size:12px;line-height:12px;color:#141414;">Type</div>
<div class="t" style="left:700.5px;top:655px;font-size:12px;line-height:12px;color:#141414;">Depr.</div>
<div class="t" style="left:700.5px;top:670px;font-size:12px;line-height:12px;color:#141414;">Acquisition</div>
<div class="t" style="left:700.5px;top:685px;font-size:12px;line-height:12px;color:#141414;">Cost</div>
<div class="t" style="left:775.5px;top:655px;font-size:12px;line-height:12px;color:#141414;">Depr. until</div>
<div class="t" style="left:775.5px;top:670px;font-size:12px;line-height:12px;color:#141414;">FA Posting</div>
<div class="t" style="left:775.5px;top:685px;font-size:12px;line-height:12px;color:#141414;">Date</div>
<div class="t" style="left:849.5px;top:655px;font-size:12px;line-height:12px;color:#141414;">Depreciation</div>
<div class="t" style="left:849.5px;top:670px;font-size:12px;line-height:12px;color:#141414;">Book Code</div>
<div style="position:absolute;left:10px;top:701px;width:914px;height:1px;background:#d0d0d0"></div>
<div style="position:absolute;left:10px;top:702px;width:914px;height:23px;background:#cce4f7"></div>
<div style="position:absolute;left:31px;top:702px;width:83px;height:23px;background:#fff"></div>
<div style="position:absolute;left:34px;top:705px;width:58px;height:15px;background:#0078d7"></div>
<div style="position:absolute;left:92px;top:705px;width:1px;height:15px;background:#e07020"></div>
<div class="t" style="left:35px;top:707px;font-size:11.2px;line-height:11.2px;color:#fff;letter-spacing:-0.1px">Fixed Asset</div>
<svg style="position:absolute;left:100px;top:710px" width="10" height="6" viewBox="0 0 10 6"><path d="M0.6 0.6L4.3 4.3L8 0.6" fill="none" stroke="#555" stroke-width="1.3"/></svg>
<div class="t" style="left:118.5px;top:707px;font-size:12px;line-height:12px;color:#000;">FA0837</div>
<div class="t" style="left:171px;top:707px;font-size:12px;line-height:12px;color:#000;">Telphone System</div>
<div class="t" style="right:806.5px;top:707px;font-size:12px;line-height:12px;color:#000;">1</div>
<div class="t" style="right:701px;top:707px;font-size:12px;line-height:12px;color:#000;letter-spacing:-0.55px;">1,000.00</div>
<div class="t" style="right:570px;top:707px;font-size:12px;line-height:12px;color:#000;letter-spacing:-0.55px;">1,000.00</div>
<div class="t" style="left:613.5px;top:707px;font-size:12px;line-height:12px;color:#000;">Acquisition ...</div>
<div style="position:absolute;left:724px;top:707px;width:11px;height:11px;border:1px solid #333;background:#fff"></div>
<div style="position:absolute;left:799px;top:707px;width:11px;height:11px;border:1px solid #333;background:#fff"></div>
<div class="t" style="left:846.5px;top:707px;font-size:12px;line-height:12px;color:#000;">STRT-LINE</div>
<div style="position:absolute;left:10px;top:747px;width:914px;height:1px;background:#e8e8e8"></div>
<div style="position:absolute;left:10px;top:770px;width:914px;height:1px;background:#e8e8e8"></div>
<div style="position:absolute;left:925px;top:649px;width:15px;height:129px;background:#f0f0f0"></div>
<div style="position:absolute;left:925px;top:666px;width:15px;height:57px;background:#cdcdcd"></div>
<svg style="position:absolute;left:927px;top:655px" width="9" height="6" viewBox="0 0 9 6"><path d="M1 5L4.5 1.5L8 5" fill="none" stroke="#555" stroke-width="2"/></svg>
<svg style="position:absolute;left:927px;top:767px" width="9" height="6" viewBox="0 0 9 6"><path d="M1 1L4.5 4.5L8 1" fill="none" stroke="#555" stroke-width="2"/></svg>
<div style="position:absolute;left:10px;top:778px;width:930px;height:17px;background:#f0f0f0"></div>
<div style="position:absolute;left:27px;top:779px;width:448px;height:15px;background:#cdcdcd"></div>
<svg style="position:absolute;left:14px;top:782px" width="7" height="9" viewBox="0 0 7 9"><path d="M5.5 0.5L1.5 4.5L5.5 8.5" fill="none" stroke="#555" stroke-width="1.5"/></svg>
<svg style="position:absolute;left:912px;top:782px" width="7" height="9" viewBox="0 0 7 9"><path d="M1.5 0.5L5.5 4.5L1.5 8.5" fill="none" stroke="#555" stroke-width="1.5"/></svg>
<div style="position:absolute;left:10px;top:794px;width:930px;height:1px;background:#a8a8a8"></div>
<div class="t" style="left:13.5px;top:802px;font-size:12px;line-height:12px;color:#1e1e1e;">Total Gross Weight</div>
<div style="position:absolute;left:13px;top:818px;width:219px;height:21px;border:1px solid #777;background:#fff;box-shadow:inset 0 0 0 1px #fff, inset 0 0 0 2px #ebebeb"></div>
<div class="t" style="right:945.5px;top:823px;font-size:12px;line-height:12px;color:#000;font-weight:bold;">0.00</div>
<div class="t" style="left:237.5px;top:802px;font-size:12px;line-height:12px;color:#1e1e1e;">Total Excl. Tax (USD):</div>
<div style="position:absolute;left:237px;top:818px;width:219px;height:21px;border:1px solid #777;background:#fff;box-shadow:inset 0 0 0 1px #fff, inset 0 0 0 2px #ebebeb"></div>
<div class="t" style="right:721.5px;top:823px;font-size:12px;line-height:12px;color:#000;font-weight:bold;">1,000.00</div>
<div class="t" style="left:461.5px;top:802px;font-size:12px;line-height:12px;color:#1e1e1e;">Total Tax (USD):</div>
<div style="position:absolute;left:461px;top:818px;width:219px;height:21px;border:1px solid #777;background:#fff;box-shadow:inset 0 0 0 1px #fff, inset 0 0 0 2px #ebebeb"></div>
<div class="t" style="right:497.5px;top:823px;font-size:12px;line-height:12px;color:#000;font-weight:bold;">0.00</div>
<div class="t" style="left:685.5px;top:802px;font-size:12px;line-height:12px;color:#1e1e1e;">Total Amount Incl. Tax</div>
<div style="position:absolute;left:685px;top:818px;width:254px;height:21px;border:1px solid #777;background:#fff;"></div>
<div class="t" style="right:238.5px;top:823px;font-size:12px;line-height:12px;color:#000;font-weight:bold;">1,000.00</div>
<div style="position:absolute;left:10px;top:851px;width:931px;height:25px;background:#efefef"></div>
<div class="t" style="left:17.5px;top:858px;font-size:13.8px;line-height:13.8px;color:#141414;">Invoice Details</div>
<div class="t" style="left:814px;top:859px;font-size:12px;line-height:12px;color:#444;">5/8/2024</div>
<div style="position:absolute;left:872px;top:857px;width:1px;height:13px;background:#ccc"></div>
<div class="t" style="left:880px;top:859px;font-size:12px;line-height:12px;color:#444;">30</div>
<svg style="position:absolute;left:922px;top:861px" width="9" height="6" viewBox="0 0 9 6"><path d="M1 1L4.5 4.5L8 1" fill="none" stroke="#1e1e1e" stroke-width="2"/></svg>
<div style="position:absolute;left:10px;top:877px;width:931px;height:25px;background:#efefef"></div>
<div class="t" style="left:17.5px;top:884px;font-size:13.8px;line-height:13.8px;color:#141414;">Shipping and Payment</div>
<svg style="position:absolute;left:922px;top:887px" width="9" height="6" viewBox="0 0 9 6"><path d="M1 1L4.5 4.5L8 1" fill="none" stroke="#1e1e1e" stroke-width="2"/></svg>
<div style="position:absolute;left:951px;top:187px;width:200px;height:276px;background:#f0f0f0"></div>
<div class="t" style="left:959.5px;top:193px;font-size:14px;line-height:14px;color:#141414;">Incoming Document ...</div>
<svg style="position:absolute;left:1132px;top:198px" width="9" height="6" viewBox="0 0 9 6"><path d="M1 5L4.5 1.5L8 5" fill="none" stroke="#1e1e1e" stroke-width="2"/></svg>
<svg style="position:absolute;left:961.5px;top:217.5px" width="9" height="16" viewBox="0 0 9 16"><path d="M7.5 4.5V11.5A3.5 3.5 0 0 1 0.5 11.5V3.5A2.5 2.5 0 0 1 5.5 3.5V11A1.5 1.5 0 0 1 2.5 11V5" fill="none" stroke="#888" stroke-width="1.1"/></svg>
<div class="t" style="left:979.5px;top:221px;font-size:12.5px;line-height:12.5px;color:#141414;">Attach File</div>
<svg style="position:absolute;left:1136px;top:221px" width="10" height="8" viewBox="0 0 10 8"><path d="M1 1L4 4L1 7M5 1L8 4L5 7" fill="none" stroke="#1a2a6a" stroke-width="1.5"/></svg>
<div style="position:absolute;left:953px;top:238px;width:196px;height:1px;background:#d0d0d0"></div>
<div class="t" style="left:980px;top:244.5px;font-size:12.5px;line-height:12.5px;color:#141414;">Name</div>
<div class="t" style="right:40px;top:244.5px;font-size:12.5px;line-height:12.5px;color:#141414;">Type</div>
<div style="position:absolute;left:953px;top:276px;width:196px;height:1px;background:#d0d0d0"></div>
<div style="position:absolute;left:951px;top:473px;width:200px;height:208px;background:#f0f0f0"></div>
<div class="t" style="left:959.5px;top:479px;font-size:14px;line-height:14px;color:#141414;">Vendor Statistics</div>
<svg style="position:absolute;left:1132px;top:484px" width="9" height="6" viewBox="0 0 9 6"><path d="M1 5L4.5 1.5L8 5" fill="none" stroke="#1e1e1e" stroke-width="2"/></svg>
<div class="t" style="left:961.5px;top:509px;font-size:12px;line-height:12px;color:#1e1e1e;">Vendor No.:</div>
<div class="t" style="right:35px;top:509px;font-size:12px;line-height:12px;color:#0b63d0;">V000005</div>
<div class="t" style="left:961.5px;top:528px;font-size:12px;line-height:12px;color:#1e1e1e;">Balance ($):</div>
<div class="t" style="right:35px;top:528px;font-size:12px;line-height:12px;color:#0b63d0;letter-spacing:-0.55px;">1,500.00</div>
<div class="t" style="left:961.5px;top:547px;font-size:12px;line-height:12px;color:#1e1e1e;">Outstanding Ord...</div>
<div class="t" style="right:35px;top:547px;font-size:12px;line-height:12px;color:#0b63d0;letter-spacing:-0.55px;">1,069.14</div>
<div class="t" style="left:961.5px;top:566px;font-size:12px;line-height:12px;color:#1e1e1e;">Amt. Rcd. Not Inv...</div>
<div class="t" style="right:35px;top:566px;font-size:12px;line-height:12px;color:#0b63d0;">0.00</div>
<div class="t" style="left:961.5px;top:585px;font-size:12px;line-height:12px;color:#1e1e1e;">Outstanding Invo...</div>
<div class="t" style="right:35px;top:585px;font-size:12px;line-height:12px;color:#0b63d0;letter-spacing:-0.55px;">1,000.00</div>
<div class="t" style="left:961.5px;top:604px;font-size:12px;line-height:12px;color:#1e1e1e;">Total ($):</div>
<div class="t" style="right:35px;top:604px;font-size:12px;line-height:12px;color:#262626;letter-spacing:-0.55px;">3,569.14</div>
<div class="t" style="left:961.5px;top:623px;font-size:12px;line-height:12px;color:#1e1e1e;">Overdue Amount...</div>
<div class="t" style="right:35px;top:623px;font-size:12px;line-height:12px;color:#0b63d0;letter-spacing:-0.55px;">1,500.00</div>
<div class="t" style="left:961.5px;top:642px;font-size:12px;line-height:12px;color:#1e1e1e;">Gross Weight:</div>
<div class="t" style="right:35px;top:642px;font-size:12px;line-height:12px;color:#0b63d0;letter-spacing:-0.55px;">5,515.00</div>
<div class="t" style="left:961.5px;top:661px;font-size:12px;line-height:12px;color:#1e1e1e;">Invoiced Prepay...</div>
<div class="t" style="right:35px;top:661px;font-size:12px;line-height:12px;color:#262626;">0.00</div>
<div style="position:absolute;left:951px;top:691px;width:200px;height:222px;background:#f0f0f0"></div>
<div class="t" style="left:959.5px;top:697px;font-size:14px;line-height:14px;color:#141414;">Notes</div>
<svg style="position:absolute;left:1132px;top:702px" width="9" height="6" viewBox="0 0 9 6"><path d="M1 5L4.5 1.5L8 5" fill="none" stroke="#1e1e1e" stroke-width="2"/></svg>
<div class="t" style="left:960.5px;top:725px;font-size:12px;line-height:12px;color:#0b63d0;">Click here to create a new note.</div>
<div class="t" style="left:750px;width:600px;text-align:center;top:765px;font-size:12px;line-height:12px;color:#808080;">There is nothing to show in this</div>
<div class="t" style="left:750px;width:600px;text-align:center;top:780px;font-size:12px;line-height:12px;color:#808080;">view.</div>
<div style="position:absolute;left:1162px;top:187px;width:14px;height:726px;background:#f0f0f0"></div>
<div style="position:absolute;left:1162px;top:204px;width:14px;height:603px;background:#cdcdcd"></div>
<svg style="position:absolute;left:1165px;top:193px" width="9" height="6" viewBox="0 0 9 6"><path d="M1 5L4.5 1.5L8 5" fill="none" stroke="#555" stroke-width="2"/></svg>
<svg style="position:absolute;left:1165px;top:902px" width="9" height="6" viewBox="0 0 9 6"><path d="M1 1L4.5 4.5L8 1" fill="none" stroke="#555" stroke-width="2"/></svg>
<svg style="position:absolute;left:552px;top:397px" width="13" height="20" viewBox="0 0 13 20"><path d="M0.5 0.5V16.5L4.5 12.5L7.5 18.5L9.5 17.5L6.5 11.5H11.5Z" fill="#fff" stroke="#000" stroke-width="1"/></svg>
<div style="position:absolute;left:1095px;top:924px;width:71px;height:25px;background:#e1e1e1;border:1px solid #adadad"></div>
<div class="t" style="left:831px;width:600px;text-align:center;top:929.5px;font-size:12px;line-height:12px;color:#000;">OK</div>
</body></html>
